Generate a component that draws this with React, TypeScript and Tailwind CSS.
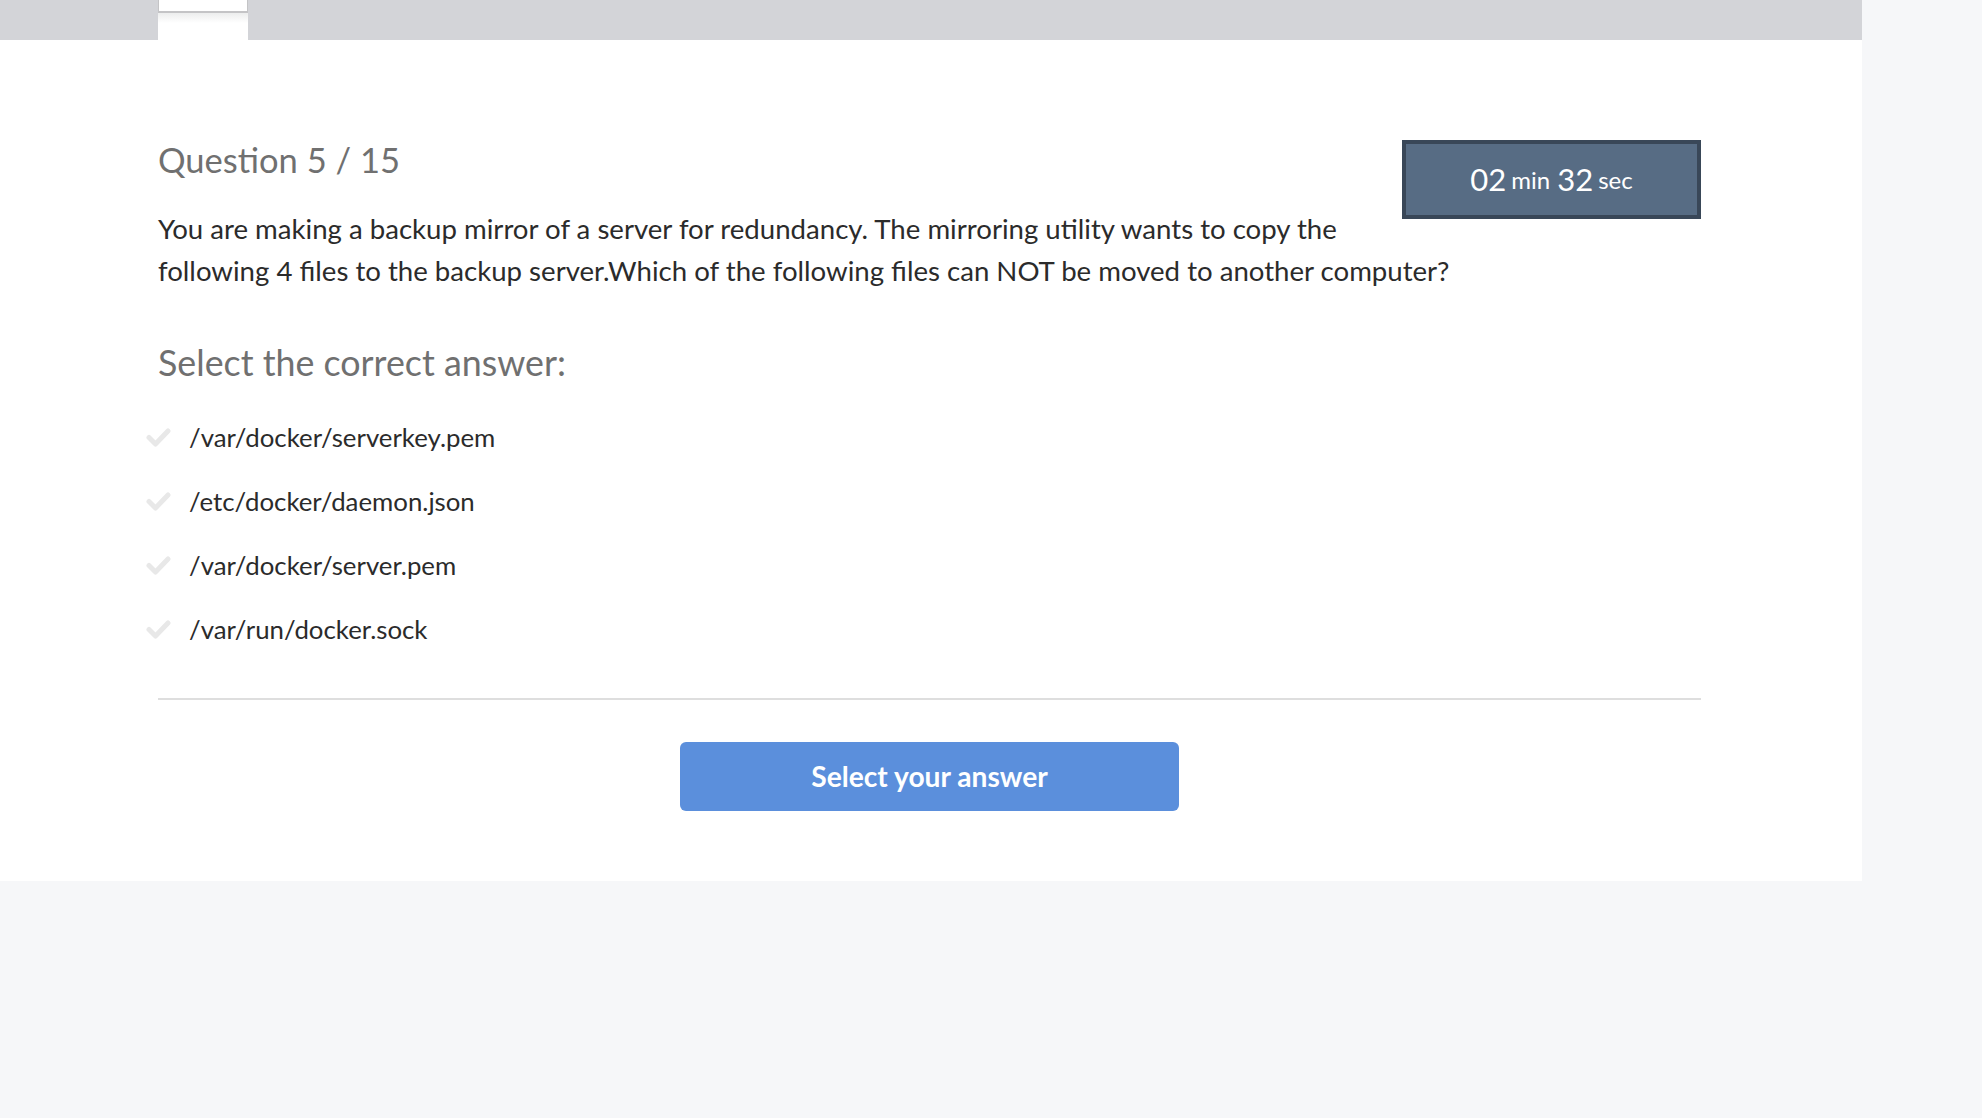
import React from "react";

const options = [
  "/var/docker/serverkey.pem",
  "/etc/docker/daemon.json",
  "/var/docker/server.pem",
  "/var/run/docker.sock",
];

function Check() {
  return (
    <svg width="26" height="22" viewBox="0 0 26 22" className="shrink-0">
      <path d="M4 11.5 L10.5 18 L23 5" fill="none" stroke="#e8e8e8" strokeWidth="5" strokeLinecap="round" strokeLinejoin="round" />
    </svg>
  );
}

export default function App() {
  return (
    <div className="min-h-[1118px] w-full bg-[#f6f7f9]" style={{ fontFamily: "Lato, 'Noto Sans', sans-serif" }}>
      <div className="w-[1862px] bg-white">
        <div className="flex h-[40px] bg-[#d3d4d8]">
          <div className="ml-[158px] flex h-full w-[90px] flex-col bg-white">
            <div className="h-[13px] border-x border-b-2 border-[#c4c4c6] bg-white" />
            <div className="h-[10px] bg-gradient-to-b from-[#eceded] to-white" />
          </div>
        </div>
        <div className="pb-[70px] pl-[158px] pr-[161px] pt-[100px]">
          <div className="float-right flex h-[79px] w-[299px] items-center justify-center border-4 border-[#394758] bg-[#576c84] text-white">
            <span className="text-[31px] leading-none">02</span>
            <span className="ml-[5px] text-[24px] leading-none">min</span>
            <span className="ml-[7px] text-[31px] leading-none">32</span>
            <span className="ml-[5px] text-[24px] leading-none">sec</span>
          </div>
          <div className="-mt-[2px] text-[34.5px] leading-[44px] text-[#707070]">Question 5 / 15</div>
          <p className="mt-[26px] text-[27.6px] leading-[42px] text-[#2b2b2b]">
            You are making a backup mirror of a server for redundancy. The mirroring utility wants to copy the following 4 files to the backup server.Which of the following files can NOT be moved to another computer?
          </p>
          <div className="mt-[49px] text-[35.8px] leading-[44px] text-[#707070]">Select the correct answer:</div>
          <div className="mt-[20px] flex flex-col">
            {options.map((o) => (
              <div key={o} className="-ml-[13px] flex h-[64px] items-center gap-[18px]">
                <Check />
                <span className="text-[25.8px] text-[#2b2b2b]">{o}</span>
              </div>
            ))}
          </div>
          <div className="mt-[37px] border-t-2 border-[#dedede]" />
          <div className="mt-[42px] flex justify-center">
            <button className="h-[69px] w-[499px] rounded-[6px] bg-[#5b8fdc] text-[28.2px] font-bold text-white">
              Select your answer
            </button>
          </div>
        </div>
      </div>
    </div>
  );
}
